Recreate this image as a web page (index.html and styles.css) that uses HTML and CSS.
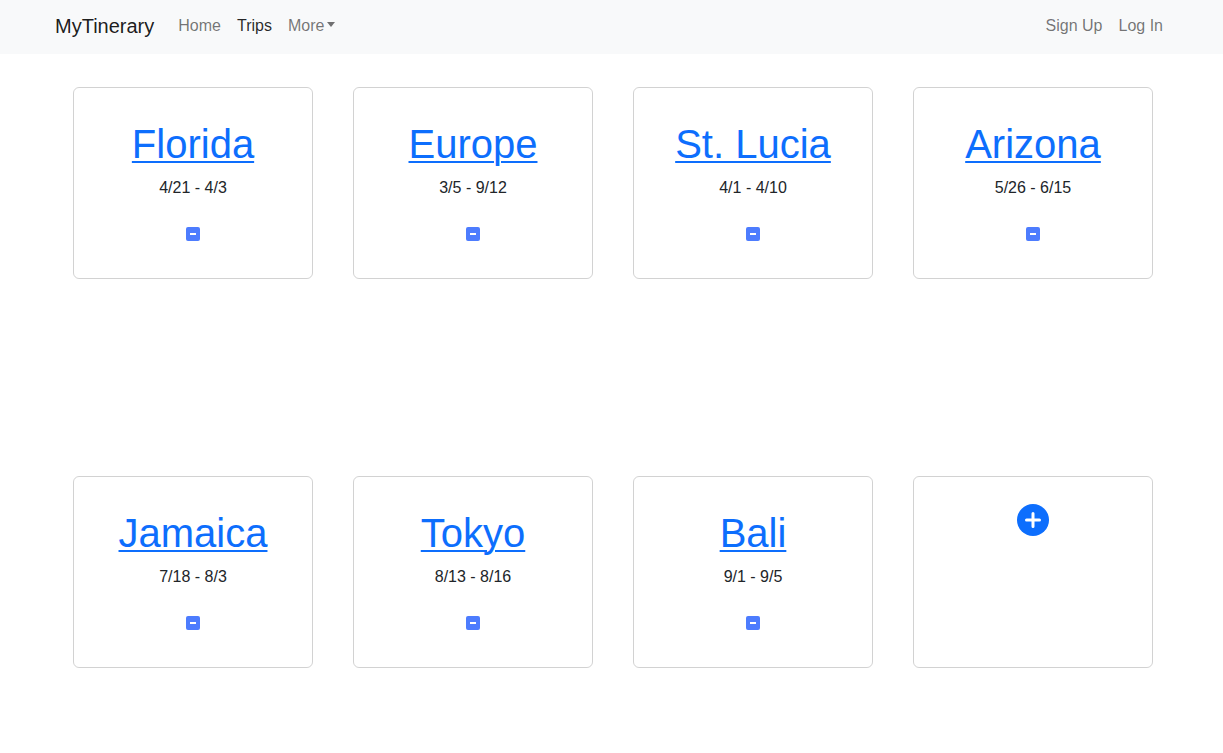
FILE: index.html
```html
<!DOCTYPE html>
<html lang="en">
<head>
<meta charset="utf-8">
<title>MyTinerary</title>
<link rel="stylesheet" href="styles.css">
</head>
<body>
<nav class="navbar">
  <div class="nav-inner">
    <a class="brand" href="#">MyTinerary</a>
    <ul class="nav-links">
      <li><a class="nav-link" href="#">Home</a></li>
      <li><a class="nav-link active" href="#">Trips</a></li>
      <li><a class="nav-link dropdown-toggle" href="#">More</a></li>
    </ul>
    <ul class="nav-links nav-right">
      <li><a class="nav-link" href="#">Sign Up</a></li>
      <li><a class="nav-link" href="#">Log In</a></li>
    </ul>
  </div>
</nav>

<main class="trips">
  <div class="card">
    <a class="trip-title" href="#">Florida</a>
    <p class="dates">4/21 - 4/3</p>
    <button class="remove" aria-label="Remove"><span class="dash"></span></button>
  </div>
  <div class="card">
    <a class="trip-title" href="#">Europe</a>
    <p class="dates">3/5 - 9/12</p>
    <button class="remove" aria-label="Remove"><span class="dash"></span></button>
  </div>
  <div class="card">
    <a class="trip-title" href="#">St. Lucia</a>
    <p class="dates">4/1 - 4/10</p>
    <button class="remove" aria-label="Remove"><span class="dash"></span></button>
  </div>
  <div class="card">
    <a class="trip-title" href="#">Arizona</a>
    <p class="dates">5/26 - 6/15</p>
    <button class="remove" aria-label="Remove"><span class="dash"></span></button>
  </div>
  <div class="card">
    <a class="trip-title" href="#">Jamaica</a>
    <p class="dates">7/18 - 8/3</p>
    <button class="remove" aria-label="Remove"><span class="dash"></span></button>
  </div>
  <div class="card">
    <a class="trip-title" href="#">Tokyo</a>
    <p class="dates">8/13 - 8/16</p>
    <button class="remove" aria-label="Remove"><span class="dash"></span></button>
  </div>
  <div class="card">
    <a class="trip-title" href="#">Bali</a>
    <p class="dates">9/1 - 9/5</p>
    <button class="remove" aria-label="Remove"><span class="dash"></span></button>
  </div>
  <div class="card card-add">
    <button class="add" aria-label="Add trip">
      <svg width="32" height="32" viewBox="0 0 32 32">
        <circle cx="16" cy="16" r="16" fill="#0d6efd"/>
        <path d="M16 9.5v13M9.5 16h13" stroke="#fff" stroke-width="3" stroke-linecap="round"/>
      </svg>
    </button>
  </div>
</main>
</body>
</html>
```

FILE: styles.css
```css
* { box-sizing: border-box; }

html, body {
  margin: 0;
  padding: 0;
  background: #fff;
  font-family: "Liberation Sans", Arial, sans-serif;
  color: #212529;
}

.navbar {
  background: #f8f9fa;
  height: 54px;
}

.nav-inner {
  height: 54px;
  display: flex;
  align-items: center;
  padding: 0 52px 2px 55px;
}

.brand {
  font-size: 20px;
  line-height: 30px;
  color: rgba(0, 0, 0, 0.9);
  text-decoration: none;
  margin-right: 16px;
}

.nav-links {
  display: flex;
  list-style: none;
  margin: 0;
  padding: 0;
}

.nav-right {
  margin-left: auto;
}

.nav-link {
  display: block;
  padding: 8px;
  font-size: 16px;
  line-height: 24px;
  color: rgba(0, 0, 0, 0.55);
  text-decoration: none;
}

.nav-link.active {
  color: rgba(0, 0, 0, 0.85);
}

.dropdown-toggle::after {
  content: "";
  display: inline-block;
  margin-left: 3px;
  vertical-align: 4px;
  border-top: 5px solid;
  border-left: 4.5px solid transparent;
  border-right: 4.5px solid transparent;
}

.trips {
  display: grid;
  grid-template-columns: repeat(4, 240px);
  column-gap: 40px;
  row-gap: 197px;
  padding: 33px 0 40px 73px;
}

.card {
  height: 192px;
  border: 1px solid rgba(0, 0, 0, 0.175);
  border-radius: 6px;
  display: flex;
  flex-direction: column;
  align-items: center;
  padding-top: 32px;
}

.trip-title {
  font-size: 40px;
  line-height: 48px;
  color: #0d6efd;
  text-decoration: underline;
  text-decoration-thickness: 2px;
  text-underline-offset: 3px;
}

.dates {
  margin: 8px 0 0;
  font-size: 16px;
  line-height: 24px;
  color: #212529;
}

.remove {
  margin-top: 27px;
  width: 14px;
  height: 14px;
  padding: 0;
  border: none;
  border-radius: 2px;
  background: #4d7cfe;
  display: flex;
  align-items: center;
  justify-content: center;
}

.dash {
  width: 6px;
  height: 2px;
  background: #fff;
}

.card-add {
  padding-top: 27px;
}

.add {
  padding: 0;
  border: none;
  background: none;
  width: 32px;
  height: 32px;
  display: block;
}

.add svg {
  display: block;
}
```
